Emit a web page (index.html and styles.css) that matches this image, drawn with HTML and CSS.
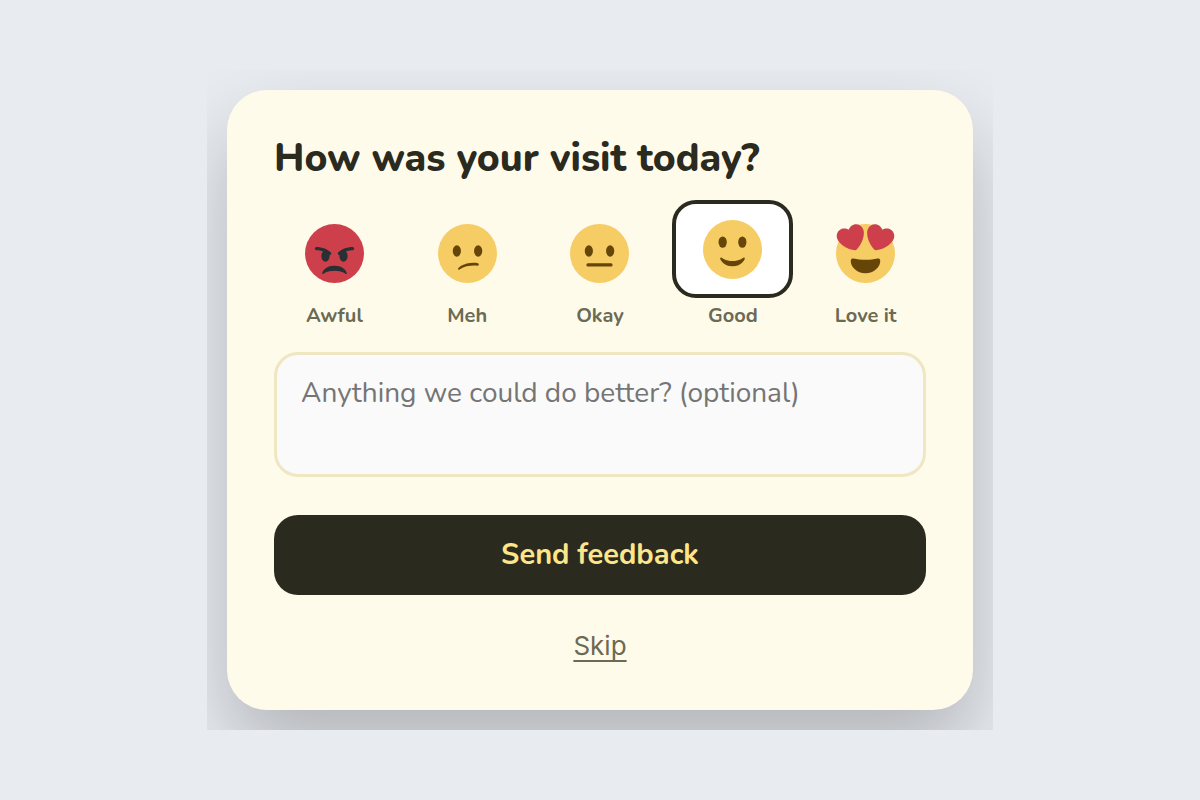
FILE: index.html
```html
<!DOCTYPE html>
<html lang="en">
<head>
<meta charset="utf-8">
<meta name="viewport" content="width=device-width, initial-scale=1">
<title>Visit feedback</title>
<link rel="stylesheet" href="styles.css">
</head>
<body>
<main class="stage">
  <form class="card">
    <h1 class="title" id="question">How was your visit today?</h1>
    <div class="ratings" role="radiogroup" aria-labelledby="question">
      <label class="rating">
        <input class="rating-input" type="radio" name="rating" value="1">
        <span class="tile">
          <svg class="face" viewBox="0 0 36 36" aria-hidden="true">
            <circle class="red" cx="18" cy="18" r="18"/>
            <path class="ink" transform="translate(0 2)" d="M25.485 27.879C25.44 27.7 24.317 23.5 18 23.5c-6.318 0-7.44 4.2-7.485 4.379-.055.217.043.442.237.554.195.109.439.079.6-.077.019-.019 1.954-1.856 6.648-1.856s6.63 1.837 6.648 1.855c.096.095.224.145.352.145.084 0 .169-.021.246-.064.196-.112.294-.339.239-.557zm-9.778-12.586C12.452 12.038 7.221 12 7 12c-.552 0-.999.447-.999.998-.001.552.446 1 .998 1.002.029 0 1.925.022 3.983.737-.593.64-.982 1.634-.982 2.763 0 1.934 1.119 3.5 2.5 3.5s2.5-1.566 2.5-3.5c0-.174-.019-.34-.037-.507.013 0 .025.007.037.007.256 0 .512-.098.707-.293.391-.391.391-1.023 0-1.414zM29 12c-.221 0-5.451.038-8.707 3.293-.391.391-.391 1.023 0 1.414.195.195.451.293.707.293.013 0 .024-.007.036-.007-.016.167-.036.333-.036.507 0 1.934 1.119 3.5 2.5 3.5s2.5-1.566 2.5-3.5c0-1.129-.389-2.123-.982-2.763 2.058-.715 3.954-.737 3.984-.737.551-.002.998-.45.997-1.002-.001-.551-.447-.998-.999-.998z"/>
          </svg>
        </span>
        <span class="rating-name">Awful</span>
      </label>
      <label class="rating">
        <input class="rating-input" type="radio" name="rating" value="2">
        <span class="tile">
          <svg class="face" viewBox="0 0 36 36" aria-hidden="true">
            <circle class="yellow" cx="18" cy="18" r="18"/>
            <ellipse class="brown" cx="11.5" cy="16.5" rx="2.5" ry="3.5"/>
            <ellipse class="brown" cx="24.5" cy="16.5" rx="2.5" ry="3.5"/>
            <path class="brown" d="M12.5 27.9c-.3-.2-.3-.6-.1-.9.1-.2 2.9-3.3 9.3-3.3 1 0 2 .1 2.6.2.5.1.7.5.6.9-.1.4-.4.6-.9.6-6.6-.6-10.3 1.900-10.900 2.400-.2.2-.4.2-.6.1z"/>
          </svg>
        </span>
        <span class="rating-name">Meh</span>
      </label>
      <label class="rating">
        <input class="rating-input" type="radio" name="rating" value="3">
        <span class="tile">
          <svg class="face" viewBox="0 0 36 36" aria-hidden="true">
            <circle class="yellow" cx="18" cy="18" r="18"/>
            <ellipse class="brown" cx="11.5" cy="16.5" rx="2.5" ry="3.5"/>
            <ellipse class="brown" cx="24.5" cy="16.5" rx="2.5" ry="3.5"/>
            <rect class="brown" x="10" y="24" width="16" height="2" rx="1"/>
          </svg>
        </span>
        <span class="rating-name">Okay</span>
      </label>
      <label class="rating">
        <input class="rating-input" type="radio" name="rating" value="4" checked>
        <span class="tile">
          <svg class="face" viewBox="0 0 36 36" aria-hidden="true">
            <circle class="yellow" cx="18" cy="18" r="18"/>
            <ellipse class="brown" cx="12" cy="13.5" rx="2.5" ry="3.5"/>
            <ellipse class="brown" cx="24" cy="13.5" rx="2.5" ry="3.5"/>
            <path class="brown" d="M10.5 23.6c.1.3 1.7 4.6 7.5 4.6s7.4-4.3 7.5-4.6c.1-.2 0-.4-.2-.6-.2-.1-.5-.1-.7 0-.1 0-2.4 2-6.6 2s-6.5-2-6.6-2c-.2-.1-.5-.1-.7 0-.2.2-.3.4-.2.6z"/>
          </svg>
        </span>
        <span class="rating-name">Good</span>
      </label>
      <label class="rating">
        <input class="rating-input" type="radio" name="rating" value="5">
        <span class="tile">
          <svg class="face" viewBox="0 0 36 36" aria-hidden="true">
            <circle class="yellow" cx="18" cy="18" r="18"/>
            <path class="brown" d="M18 21.849c-2.966 0-4.935-.346-7.369-.819-.557-.106-1.638 0-1.638 1.638 0 3.275 3.763 7.369 9.007 7.369s9.007-4.094 9.007-7.369c0-1.638-1.082-1.745-1.638-1.638-2.434.473-4.402.819-7.369.819"/>
            <path class="red" d="M16.65 3.281C15.791.85 13.126-.426 10.694.431c-1.476.52-2.521 1.711-2.928 3.104-1.191-.829-2.751-1.1-4.225-.58C1.111 3.813-.167 6.48.692 8.911c.122.344.284.663.472.958 1.951 3.582 7.588 6.1 11.001 6.131 2.637-2.167 5.446-7.665 4.718-11.677-.038-.348-.113-.698-.233-1.042zm2.7 0C20.209.85 22.875-.426 25.306.431c1.476.52 2.521 1.711 2.929 3.104 1.191-.829 2.751-1.1 4.225-.58 2.43.858 3.707 3.525 2.85 5.956-.123.344-.284.663-.473.958-1.951 3.582-7.588 6.1-11.002 6.131-2.637-2.167-5.445-7.665-4.717-11.677.037-.348.112-.698.232-1.042z"/>
          </svg>
        </span>
        <span class="rating-name">Love it</span>
      </label>
    </div>
    <textarea class="comment" name="comment" aria-label="Comments" placeholder="Anything we could do better? (optional)"></textarea>
    <button class="send" type="button">Send feedback</button>
    <a class="skip" href="#">Skip</a>
  </form>
</main>
</body>
</html>
```
FILE: styles.css
```css
* {
  box-sizing: border-box;
}

body {
  display: grid;
  align-content: center;
  justify-content: center;
  grid-template-columns: minmax(0, 786px);
  min-height: 100vh;
  margin: 0;
  background: #e8ebf0;
  color: #2b2a1f;
  font-family: Nunito, "Open Sans", sans-serif;
}

.stage {
  overflow: hidden;
  padding: 20px;
}

.card {
  display: flex;
  flex-direction: column;
  padding: 45px 47px 48px;
  border-radius: 40px;
  background: #fffbeb;
  box-shadow: 0 40px 80px rgba(0, 0, 0, 0.23);
}

.title {
  margin: 0 0 17px;
  font-size: 39px;
  font-weight: 800;
  line-height: 48px;
}

.ratings {
  display: grid;
  grid-template-columns: repeat(5, minmax(0, 1fr));
  gap: 12px;
}

.rating {
  display: flex;
  flex-direction: column;
  gap: 4px;
  cursor: pointer;
}

.rating-input {
  position: absolute;
  opacity: 0;
  pointer-events: none;
}

.tile {
  display: flex;
  align-items: center;
  justify-content: center;
  height: 98px;
  padding-top: 8px;
  border-radius: 24px;
}

.rating-input:checked + .tile {
  padding: 0;
  border: 4px solid #2b2a1f;
  background: #fff;
}

.rating-input:focus-visible + .tile {
  outline: 2px solid #8b8a6f;
}

.face {
  width: 59px;
  height: 59px;
}

.red {
  fill: #cd404b;
}

.yellow {
  fill: #f6cc64;
}

.brown {
  fill: #664509;
}

.ink {
  fill: #292f33;
}

.rating-name {
  color: #6b6a55;
  font-size: 20px;
  font-weight: 700;
  line-height: 28px;
  text-align: center;
}

.comment {
  height: 125px;
  margin-top: 22px;
  padding: 20px 24px;
  border: 3px solid #efe6c2;
  border-radius: 24px;
  background: #fafafa;
  color: #2b2a1f;
  font: 400 28px/36px Nunito, "Open Sans", sans-serif;
  resize: none;
}

.comment::placeholder {
  color: #757575;
}

.send {
  height: 80px;
  margin-top: 38px;
  border: 0;
  border-radius: 24px;
  background: #2b2a1f;
  color: #fde68a;
  font: 700 29px/36px Nunito, "Open Sans", sans-serif;
  cursor: pointer;
}

.skip {
  align-self: center;
  margin-top: 35px;
  color: #6b6a55;
  font: 400 26px/32px Inter, sans-serif;
  text-decoration: underline;
  text-decoration-thickness: 2px;
  text-decoration-skip-ink: none;
  text-underline-offset: 5px;
}
```
